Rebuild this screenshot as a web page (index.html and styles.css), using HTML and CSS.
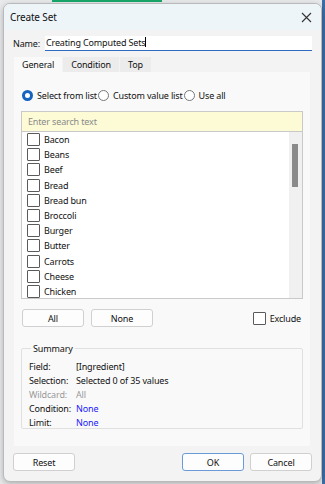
FILE: index.html
```html
<!DOCTYPE html>
<html>
  <head>
    <meta charset="utf-8">
    <title>Create Set</title>
    <link rel="stylesheet" href="styles.css">
  </head>
  <body>
    <div class="dlg">
      <div class="titlebar">
        <span class="title">Create Set</span>
        <svg class="close" width="11" height="11" viewBox="0 0 11 11"><path d="M1 1L10 10M10 1L1 10" stroke="#333" stroke-width="1.1"/></svg>
      </div>
      <div class="body">
        <div class="namerow">
          <label>Name:</label>
          <div class="nameinput">Creating Computed Sets<span class="caret"></span></div>
        </div>
        <div class="tabs">
          <span class="tab sel">General</span>
          <span class="tab">Condition</span>
          <span class="tab">Top</span>
        </div>
        <div class="panel">
          <div class="radios">
            <span class="radio on"></span><span class="rlabel">Select from list</span>
            <span class="radio"></span><span class="rlabel">Custom value list</span>
            <span class="radio"></span><span class="rlabel">Use all</span>
          </div>
          <div class="search">Enter search text</div>
          <div class="list">
            <div class="items">
              <div class="item"><span class="cb"></span>Bacon</div>
              <div class="item"><span class="cb"></span>Beans</div>
              <div class="item"><span class="cb"></span>Beef</div>
              <div class="item"><span class="cb"></span>Bread</div>
              <div class="item"><span class="cb"></span>Bread bun</div>
              <div class="item"><span class="cb"></span>Broccoli</div>
              <div class="item"><span class="cb"></span>Burger</div>
              <div class="item"><span class="cb"></span>Butter</div>
              <div class="item"><span class="cb"></span>Carrots</div>
              <div class="item"><span class="cb"></span>Cheese</div>
              <div class="item"><span class="cb"></span>Chicken</div>
            </div>
            <div class="scroll"><div class="thumb"></div></div>
          </div>
          <div class="btnrow">
            <button class="btn">All</button>
            <button class="btn">None</button>
            <span class="spacer"></span>
            <span class="cb"></span><span class="excl">Exclude</span>
          </div>
          <fieldset class="summary">
            <legend>Summary</legend>
            <div class="srow"><span class="k">Field:</span><span>[Ingredient]</span></div>
            <div class="srow"><span class="k">Selection:</span><span>Selected 0 of 35 values</span></div>
            <div class="srow dim"><span class="k">Wildcard:</span><span>All</span></div>
            <div class="srow"><span class="k">Condition:</span><span class="blue">None</span></div>
            <div class="srow"><span class="k">Limit:</span><span class="blue">None</span></div>
          </fieldset>
        </div>
        <div class="footer">
          <button class="btn">Reset</button>
          <span class="spacer"></span>
          <button class="btn ok">OK</button>
          <button class="btn">Cancel</button>
        </div>
      </div>
    </div>
  </body>
</html>
```

FILE: styles.css
```css
html, body {
  margin: 0;
  height: 100%; }
body {
  background: linear-gradient(to right, transparent 52px, #17a86a 52px, #17a86a 162px, transparent 162px) top / 100% 2px no-repeat,
    linear-gradient(to right, #e9eaec 322px, #3b6ea5 322px);
  padding: 3px 3px 4px 3px;
  box-sizing: border-box;
  font-family: "Noto Sans", "Open Sans", sans-serif;
  font-size: 9px;
  letter-spacing: -0.15px;
  color: #111; }
.dlg {
  height: 100%;
  border: 1px solid #b9b9b9;
  border-radius: 7px;
  background: #f3f3f3;
  box-shadow: 0 2px 6px rgba(0,0,0,0.25);
  display: flex;
  flex-direction: column;
  overflow: hidden; }
.titlebar {
  background: #eef5f9;
  height: 26px;
  display: flex;
  align-items: center;
  padding: 0 9px 0 6px; }
.title {
  flex: 1;
  font-size: 10px; }
.body {
  flex: 1;
  display: flex;
  flex-direction: column;
  padding: 6px 9px 10px 8px; }
.namerow {
  display: flex;
  align-items: center;
  padding-left: 1px;
  height: 15px; }
.namerow label {
  width: 32px; }
.nameinput {
  flex: 1;
  background: #fff;
  border-bottom: 1px solid #2d6cc0;
  height: 14px;
  line-height: 14px;
  padding-left: 1px; }
.caret {
  display: inline-block;
  width: 1px;
  height: 10px;
  background: #000;
  vertical-align: -1px; }
.tabs {
  display: flex;
  margin-top: 6px;
  padding-left: 2px;
  height: 15px; }
.tab {
  padding: 0 8px;
  line-height: 15px;
  background: #ececec;
  margin-right: 1px; }
.tab.sel {
  background: #f9f9f9; }
.panel {
  flex: 1;
  background: #f9f9f9;
  margin: 0 2px 0 2px;
  padding: 17px 7px 0 7px;
  display: flex;
  flex-direction: column; }
.radios {
  display: flex;
  align-items: center;
  height: 12px; }
.radio {
  width: 9px;
  height: 9px;
  border: 1px solid #777;
  border-radius: 50%;
  background: #fff;
  margin-right: 4px;
  box-sizing: content-box; }
.radio.on {
  border: 3px solid #1565c0;
  width: 5px;
  height: 5px;
  margin-left: 1px; }
.rlabel {
  margin-right: 1px; }
.search {
  margin-top: 10px;
  height: 19px;
  line-height: 19px;
  background: #fcfbd6;
  border: 1px solid #c9c9c9;
  border-bottom: none;
  color: #8a8a8a;
  padding-left: 6px; }
.list {
  height: 166px;
  border: 1px solid #c9c9c9;
  background: #fff;
  display: flex; }
.items {
  flex: 1;
  padding: 0 0 0 5px; }
.item {
  display: flex;
  align-items: center;
  height: 15.2px; }
.cb {
  width: 11px;
  height: 11px;
  border: 1px solid #5a5a5a;
  border-radius: 1px;
  background: #fff;
  margin-right: 4px;
  flex: none; }
.scroll {
  width: 13px;
  background: #f0f0f0;
  padding-top: 12px; }
.thumb {
  width: 6px;
  height: 43px;
  margin-left: 3px;
  background: #8a8a8a; }
.btnrow {
  display: flex;
  align-items: center;
  margin-top: 10px;
  padding-left: 1px; }
.btn {
  font-family: inherit;
  font-size: 9px;
  letter-spacing: -0.15px;
  color: #111;
  width: 62px;
  height: 18px;
  padding: 0;
  background: #fdfdfd;
  border: 1px solid #d0d0d0;
  border-radius: 3px;
  margin-right: 7px; }
.spacer {
  flex: 1; }
.btnrow .cb {
  margin-right: 4px; }
.excl {
  margin-right: 2px; }
.summary {
  margin: 15px 0 0 0;
  border: 1px solid #e0e0e0;
  border-radius: 2px;
  padding: 5px 6px 6px 7px;
  height: 87px;
  box-sizing: border-box; }
.summary legend {
  padding: 0 2px;
  margin-left: 2px; }
.srow {
  display: flex;
  height: 14px;
  line-height: 14px; }
.srow .k {
  width: 47px; }
.dim {
  color: #9a9a9a; }
.blue {
  color: #1a1aff; }
.footer {
  display: flex;
  margin-top: 7px;
  padding: 0 0 0 1px; }
.footer .btn {
  margin-right: 0;
  margin-left: 6px; }
.footer .btn:first-child {
  margin-left: 0; }
.btn.ok {
  border-color: #6a9bd8; }
```
